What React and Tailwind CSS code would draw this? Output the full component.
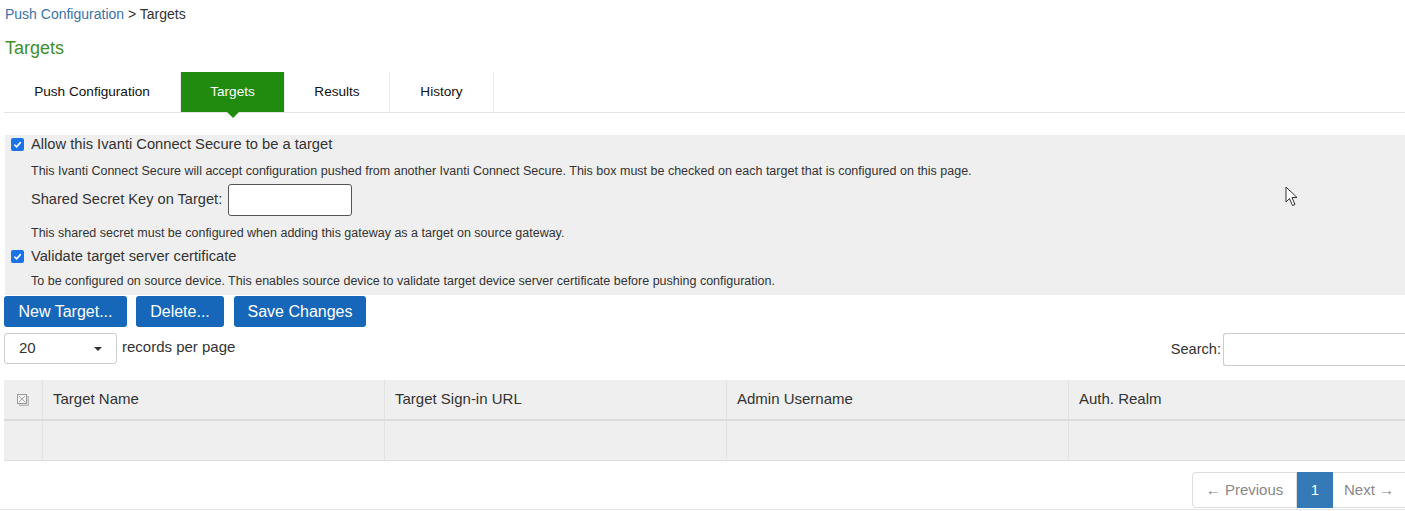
import React from 'react'

const font = { fontFamily: '"Liberation Sans", Arial, sans-serif' }

function Check() {
  return (
    <span className="inline-flex h-[13px] w-[13px] items-center justify-center rounded-[2px] bg-[#1a73e8]">
      <svg width="9" height="9" viewBox="0 0 10 10">
        <path d="M1.5 5.2 L4 7.6 L8.6 2.4" fill="none" stroke="white" strokeWidth="1.8" />
      </svg>
    </span>
  )
}

function HeaderCheck() {
  return (
    <svg width="14" height="14" viewBox="0 0 14 14">
      <rect x="3.5" y="3.5" width="9" height="9" fill="#d8d8d8" stroke="#bbb" />
      <rect x="1.5" y="1.5" width="9" height="9" fill="#f4f4f4" stroke="#999" />
      <path d="M3 3 L9 9 M9 3 L3 9" stroke="#aaa" strokeWidth="1" />
    </svg>
  )
}

function Cursor() {
  return (
    <svg className="absolute left-[1285px] top-[186px]" width="16" height="22" viewBox="0 0 16 22">
      <path d="M1 1 L1 16 L4.5 12.5 L7.5 19.5 L10 18.5 L7 11.5 L12 11.5 Z" fill="white" stroke="#333" strokeWidth="1" strokeLinejoin="round" />
    </svg>
  )
}

const tabs = ['Push Configuration', 'Targets', 'Results', 'History']
const tabWidths = ['w-[177px]', 'w-[104px]', 'w-[105px]', 'w-[104px]']
const cols = ['Target Name', 'Target Sign-in URL', 'Admin Username', 'Auth. Realm']

export default function App() {
  return (
    <div className="relative w-[1405px] h-[511px] overflow-hidden bg-white text-[#333]" style={font}>
      {/* breadcrumb + title */}
      <div className="pl-[5px] pt-[5px] text-[14px] leading-[18px]">
        <span className="text-[#3b73a9]">Push Configuration</span> &gt; Targets
      </div>
      <div className="pl-[5px] pt-[15px] text-[18px] leading-[20px] text-[#3f8f2c]">Targets</div>

      {/* tabs */}
      <div className="mt-[14px] ml-[4px] flex h-[41px] border-b border-[#e3e3e3]">
        {tabs.map((t, i) => (
          <div
            key={t}
            className={`relative flex items-center justify-center text-[13.6px] border-r border-[#ebebeb] ${tabWidths[i]} ${
              i === 1 ? 'bg-[#218b0f] text-white' : 'text-[#111]'
            }`}
          >
            {t}
            {i === 1 && (
              <span className="absolute left-1/2 top-full -translate-x-1/2 h-0 w-0 border-x-[6px] border-t-[6px] border-x-transparent border-t-[#218b0f]" />
            )}
          </div>
        ))}
      </div>

      {/* options panel */}
      <div className="mt-[22px] ml-[5px] h-[160px] bg-[#efefef] pl-[6px] pt-0">
        <div className="flex items-center gap-[7px] text-[14.7px] leading-[18px]">
          <Check />
          <span>Allow this Ivanti Connect Secure to be a target</span>
        </div>
        <div className="pl-[20px] pt-[11px] text-[12.5px] leading-[14px]">
          This Ivanti Connect Secure will accept configuration pushed from another Ivanti Connect Secure. This box must be checked on each target that is configured on this page.
        </div>
        <div className="flex items-center pl-[20px] pt-[6px] text-[14.6px]">
          <span>Shared Secret Key on Target:</span>
          <div className="ml-[6px] h-[32px] w-[124px] rounded-[3px] border-[1.5px] border-[#555] bg-white" />
        </div>
        <div className="pl-[20px] pt-[10px] text-[12.5px] leading-[14px]">
          This shared secret must be configured when adding this gateway as a target on source gateway.
        </div>
        <div className="flex items-center gap-[7px] pt-[7px] text-[14.7px] leading-[18px]">
          <Check />
          <span>Validate target server certificate</span>
        </div>
        <div className="pl-[20px] pt-[9px] text-[12.5px] leading-[14px]">
          To be configured on source device. This enables source device to validate target device server certificate before pushing configuration.
        </div>
      </div>

      {/* buttons */}
      <div className="mt-[1px] ml-[4px] flex gap-[9px]">
        {['New Target...', 'Delete...', 'Save Changes'].map((b, i) => (
          <button
            key={b}
            className={`h-[31px] rounded-[3px] bg-[#1667b9] text-[16px] text-white ${
              ['w-[123px]', 'w-[88px]', 'w-[132px]'][i]
            } ${i === 2 ? 'ml-[1px]' : ''}`}
          >
            {b}
          </button>
        ))}
      </div>

      {/* records / search */}
      <div className="mt-[6px] ml-[4px] flex items-start justify-between">
        <div className="flex items-center gap-[5px]">
          <div className="flex h-[31px] w-[113px] items-center justify-between rounded-[3px] border border-[#ccc] bg-white px-[14px] text-[15px]">
            <span>20</span>
            <span className="h-0 w-0 border-x-[4px] border-t-[4px] border-x-transparent border-t-[#333]" />
          </div>
          <span className="text-[15px] -mt-[3px]">records per page</span>
        </div>
        <div className="flex items-center">
          <span className="text-[14.6px] mr-[2px]">Search:</span>
          <div className="h-[33px] w-[182px] rounded-l-[3px] border border-r-0 border-[#ccc] bg-white" />
        </div>
      </div>

      {/* table */}
      <div className="mt-[14px] ml-[4px]">
        <div className="flex h-[41px] items-center border-b-2 border-[#dcdcdc] bg-[#efefef] text-[15px]">
          <div className="flex h-full w-[39px] items-center justify-center border-r border-[#e2e2e2]">
            <HeaderCheck />
          </div>
          {cols.map((c, i) => (
            <div
              key={c}
              className={`flex h-full items-center pl-[10px] ${i < 3 ? 'w-[342px] border-r border-[#e2e2e2]' : 'flex-1'}`}
            >
              {c}
            </div>
          ))}
        </div>
        <div className="flex h-[40px] border-b border-[#dedede] bg-[#efefef]">
          <div className="w-[39px] border-r border-[#e2e2e2]" />
          {cols.map((c, i) => (
            <div key={c} className={i < 3 ? 'w-[342px] border-r border-[#e2e2e2]' : 'flex-1'} />
          ))}
        </div>
      </div>

      {/* pagination */}
      <div className="mt-[11px] flex justify-end">
        <div className="flex h-[36px] text-[15px]">
          <div className="flex w-[105px] items-center justify-center rounded-l-[4px] border border-[#ddd] text-[#888]">
            ← Previous
          </div>
          <div className="flex w-[36px] items-center justify-center bg-[#337ab7] text-white">1</div>
          <div className="flex w-[72px] items-center justify-center border-y border-[#ddd] text-[#888]">Next →</div>
        </div>
      </div>
      <div className="mt-[1px] h-px bg-[#e5e5e5]" />

      <Cursor />
    </div>
  )
}
